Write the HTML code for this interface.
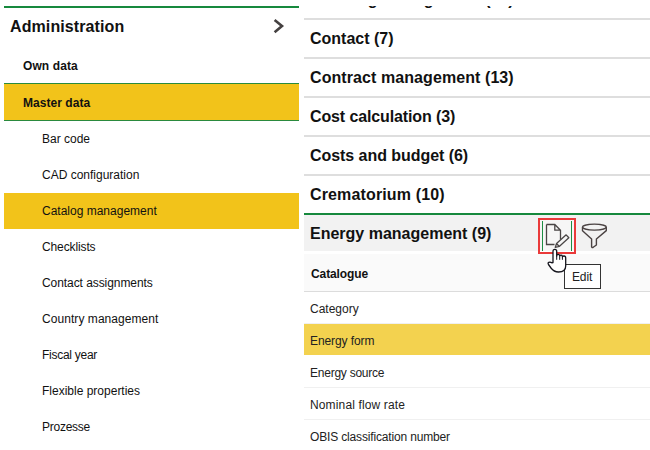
<!DOCTYPE html>
<html><head><meta charset="utf-8">
<style>
html,body{margin:0;padding:0;}
body{width:650px;height:450px;overflow:hidden;position:relative;background:#fff;font-family:"Liberation Sans",sans-serif;}
.a{position:absolute;}
.t{position:absolute;white-space:nowrap;line-height:20px;height:20px;}
.h{font-weight:700;font-size:16px;color:#111;}
.b{font-weight:700;font-size:12px;color:#111;}
.n{font-weight:400;font-size:12px;color:#111;}
.r{font-weight:400;font-size:12px;color:#222;}
.sep{position:absolute;left:304px;width:346px;height:2px;background:#dedede;}
</style></head><body>
<!-- left panel -->
<div class="a" style="left:4px;top:6px;width:295px;height:2px;background:#16893d"></div>
<div class="t h" style="letter-spacing:0.1px;left:10px;top:17px;font-size:16px">Administration</div>
<svg class="a" style="left:270px;top:16px" width="20" height="22" viewBox="0 0 20 22"><polyline points="4.6,4 12,10.1 4.6,16.3" fill="none" stroke="#454141" stroke-width="2.6"/></svg>
<div class="t b" style="letter-spacing:0.1px;left:23px;top:56px">Own data</div>
<div class="a" style="left:4px;top:83px;width:295px;height:38px;background:#f2c31a;box-sizing:border-box;border-top:1px solid #2a8a3e;border-bottom:1px solid #2a8a3e"></div>
<div class="t b" style="letter-spacing:0.05px;left:23px;top:93px">Master data</div>
<div class="a" style="left:4px;top:193px;width:295px;height:36px;background:#f2c31a"></div>
<div class="t n" style="left:42px;top:129px">Bar code</div>
<div class="t n" style="left:42px;top:165px">CAD configuration</div>
<div class="t n" style="left:42px;top:201px">Catalog management</div>
<div class="t n" style="letter-spacing:-0.12px;left:42px;top:237px">Checklists</div>
<div class="t n" style="letter-spacing:-0.07px;left:42px;top:273px">Contact assignments</div>
<div class="t n" style="letter-spacing:0.06px;left:42px;top:309px">Country management</div>
<div class="t n" style="letter-spacing:-0.27px;left:42px;top:345px">Fiscal year</div>
<div class="t n" style="left:42px;top:381px">Flexible properties</div>
<div class="t n" style="letter-spacing:-0.25px;left:42px;top:417px">Prozesse</div>

<!-- right panel -->
<div class="a" style="left:304px;top:6px;width:346px;height:12px;overflow:hidden"><div class="t h" style="letter-spacing:0px;left:6px;top:-16px">Cleaning management (10)</div></div>
<div class="sep" style="top:18px"></div>
<div class="t h" style="letter-spacing:0px;left:310px;top:29px">Contact (7)</div>
<div class="sep" style="top:57px"></div>
<div class="t h" style="letter-spacing:0.08px;left:310px;top:68px">Contract management (13)</div>
<div class="sep" style="top:96px"></div>
<div class="t h" style="letter-spacing:-0.12px;left:310px;top:107px">Cost calculation (3)</div>
<div class="sep" style="top:135px"></div>
<div class="t h" style="letter-spacing:-0.05px;left:310px;top:146px">Costs and budget (6)</div>
<div class="sep" style="top:174px"></div>
<div class="t h" style="letter-spacing:0.14px;left:310px;top:185px">Crematorium (10)</div>
<div class="a" style="left:304px;top:213px;width:346px;height:2px;background:#16893d"></div>
<div class="a" style="left:304px;top:215px;width:346px;height:36px;background:#f2f2f2"></div>
<div class="t h" style="letter-spacing:0px;left:310px;top:224px">Energy management (9)</div>

<!-- edit button -->
<div class="a" style="left:538px;top:218px;width:38px;height:36px;box-sizing:border-box;border:2px solid #ea3a3a;background:#f6f6f6"></div>
<div class="a" style="left:540px;top:251px;width:34px;height:1px;background:#fff"></div>
<div class="a" style="left:542px;top:221px;width:1px;height:30px;background:#1d8e44"></div>
<div class="a" style="left:571px;top:221px;width:1px;height:30px;background:#1d8e44"></div>
<svg class="a" style="left:538px;top:218px" width="38" height="36" viewBox="538 218 38 36">
  <path d="M546.5,224.5 H554.8 L560.5,230.2 V239.5 M554.5,244.5 H546.5 V224.5 M554.8,224.5 V230.2 H560.5" fill="none" stroke="#4a4646" stroke-width="1.3"/>
  <path d="M555.3,247.3 L556.56,243.48 L566.16,234.82 L568.84,237.78 L559.24,246.44 Z M556.56,243.48 L559.24,246.44" fill="none" stroke="#4a4646" stroke-width="1.3" stroke-linejoin="round"/>
</svg>
<!-- filter icon -->
<svg class="a" style="left:578px;top:218px" width="34" height="34" viewBox="578 218 34 34">
  <ellipse cx="594.4" cy="227.1" rx="11.9" ry="3.0" fill="none" stroke="#4a4242" stroke-width="1.4"/>
  <path d="M582.5,227.1 V230.8 L591.6,239 V246.8 Q591.9,248 593.2,247.3 L596.4,245 V239 L606.3,230.6 V227.1" fill="none" stroke="#4a4242" stroke-width="1.4" stroke-linejoin="round"/>
</svg>

<!-- table -->
<div class="a" style="left:304px;top:254px;width:346px;height:37px;background:#fafafa;border-bottom:1px solid #dcdcdc"></div>
<div class="t b" style="letter-spacing:-0.1px;left:311px;top:264px">Catalogue</div>
<div class="a" style="left:304px;top:323px;width:346px;height:1px;background:#f0f0f0"></div>
<div class="a" style="left:304px;top:324px;width:346px;height:31px;background:#f3d24f"></div>
<div class="a" style="left:304px;top:387px;width:346px;height:1px;background:#f0f0f0"></div>
<div class="a" style="left:304px;top:419px;width:346px;height:1px;background:#f0f0f0"></div>
<div class="t r" style="left:310px;top:299px">Category</div>
<div class="t r" style="letter-spacing:-0.09px;left:310px;top:331px">Energy form</div>
<div class="t r" style="letter-spacing:-0.24px;left:310px;top:363px">Energy source</div>
<div class="t r" style="letter-spacing:0.14px;left:310px;top:395px">Nominal flow rate</div>
<div class="t r" style="letter-spacing:-0.16px;left:310px;top:427px">OBIS classification number</div>

<!-- tooltip -->
<div class="a" style="left:564px;top:264px;width:37px;height:25px;box-sizing:border-box;border:1px solid #333;background:#fff"></div>
<div class="t n" style="left:572px;top:267px;color:#222;letter-spacing:-0.15px">Edit</div>

<!-- cursor -->
<svg class="a" style="left:544px;top:246px" width="26" height="30" viewBox="544 246 26 30">
  <path d="M553,262.5 V251.2 Q553,249.3 554.85,249.3 Q556.7,249.3 556.7,251.2 V256 Q556.9,254.3 558.2,254.3 Q559.6,254.3 559.7,256.2 Q559.9,255.2 561,255.2 Q562.3,255.2 562.4,256.8 Q562.7,256 564,256 Q565.7,256 565.7,258 V266 Q565.7,272 558.5,272 Q554,272 551,268 L548.5,264.5 Q547.6,263 548.8,262.3 Q550.3,261.6 551.8,262.8 Z" fill="#fff" stroke="#14141c" stroke-width="1.3" stroke-linejoin="round"/>
  <path d="M556.7,256 V259.8 M559.7,256.4 V259.8 M562.4,257 V259.8" fill="none" stroke="#14141c" stroke-width="1"/>
</svg>
</body></html>
